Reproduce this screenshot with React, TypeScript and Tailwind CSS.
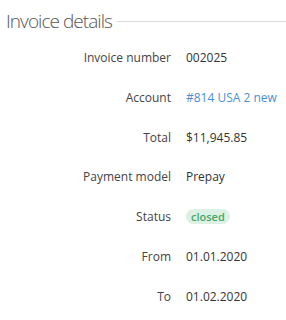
import React from "react";

const ROWS: { label: string; value: React.ReactNode }[] = [
  { label: "Invoice number", value: "002025" },
  { label: "Account", value: <a className="text-[#4a90d9]">#814 USA 2 new</a> },
  { label: "Total", value: "$11,945.85" },
  { label: "Payment model", value: "Prepay" },
  {
    label: "Status",
    value: (
      <span className="inline-block rounded-full bg-[#dcf1e3] px-[5px] text-[11px] font-semibold leading-[15px] text-[#45a86b]">
        closed
      </span>
    ),
  },
  { label: "From", value: "01.01.2020" },
  { label: "To", value: "01.02.2020" },
];

export default function App() {
  return (
    <div className="w-[286px] h-[320px] bg-white font-['Open_Sans',sans-serif] text-[#333]">
      <div className="flex items-center pl-[6px] pt-[8px]">
        <h2 className="text-[19px] leading-[26px] tracking-[-0.95px] font-light text-[#555] shrink-0">Invoice details</h2>
        <div className="ml-[5px] h-px flex-1 bg-[#d8dadf]" />
      </div>
      <div className="mt-[15px] flex flex-col gap-[21.8px] text-[12px] leading-[18px]">
        {ROWS.map((r) => (
          <div key={r.label} className="flex">
            <div className="w-[171px] text-right text-[#444]">{r.label}</div>
            <div className="ml-[15px]">{r.value}</div>
          </div>
        ))}
      </div>
    </div>
  );
}
